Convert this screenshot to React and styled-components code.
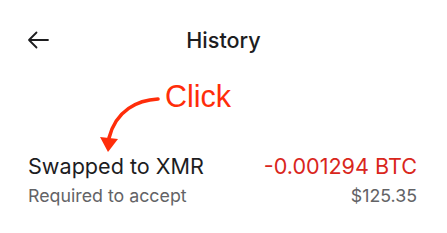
import React from "react";
import styled, { createGlobalStyle } from "styled-components";

const Global = createGlobalStyle`
  html, body { margin: 0; padding: 0; background: #ffffff; }
  body { font-family: Inter, "Noto Sans", sans-serif; color: #1d1d1f; }
`;

const Page = styled.div`
  width: 447px;
  height: 233px;
  overflow: hidden;
  display: flex;
  flex-direction: column;
`;

const Header = styled.header`
  height: 80px;
  display: grid;
  grid-template-columns: 1fr auto 1fr;
  align-items: center;
  padding: 0 27px;
`;

const BackButton = styled.button`
  justify-self: start;
  border: 0;
  background: none;
  padding: 0;
  width: 22px;
  height: 18px;
  display: flex;
  color: #1d1d1f;
  cursor: pointer;
`;

const Title = styled.h1`
  margin: 0;
  font-size: 21.6px;
  font-weight: 500;
  line-height: 24px;
  color: #1d1d1f;
`;

const Annotation = styled.div`
  height: 73px;
  display: flex;
  align-items: flex-start;
  padding-left: 98px;
`;

const ArrowMark = styled.svg`
  margin-top: 12px;
  flex: none;
  overflow: visible;
`;

const ClickLabel = styled.span`
  margin-top: 1px;
  margin-left: 3px;
  font-family: "Liberation Sans", Arial, sans-serif;
  font-size: 30.5px;
  line-height: 30px;
  color: #ff2d0a;
`;

const Row = styled.div`
  display: flex;
  flex-direction: column;
  gap: 6px;
  padding: 0 30px 0 28px;
`;

const Line = styled.div`
  display: flex;
  justify-content: space-between;
  align-items: baseline;
`;

const Primary = styled.span`
  font-size: ${(p) => (p.$small ? "17.8px" : "21.6px")};
  line-height: ${(p) => (p.$small ? "22px" : "26px")};
  color: ${(p) => p.$color || "#1d1d1f"};
`;

export default function App() {
  return (
    <>
      <Global />
      <Page>
        <Header>
          <BackButton aria-label="Back">
            <svg width="22" height="18" viewBox="0 0 22 18" fill="none">
              <path d="M21 9H2M9.5 1.5L2 9l7.5 7.5" stroke="currentColor" strokeWidth="1.8" strokeLinecap="round" strokeLinejoin="round" />
            </svg>
          </BackButton>
          <Title>History</Title>
          <span />
        </Header>
        <Annotation>
          <ArrowMark width="64" height="60" viewBox="0 0 64 60">
            <path d="M60 7 C 40 8, 18 18, 11 46" stroke="#ff2d0a" strokeWidth="3.6" fill="none" strokeLinecap="round" />
            <path d="M2 45 L20 47 L10 60 Z" fill="#ff2d0a" />
          </ArrowMark>
          <ClickLabel>Click</ClickLabel>
        </Annotation>
        <Row>
          <Line>
            <Primary>Swapped to XMR</Primary>
            <Primary $color="#d9261c">-0.001294 BTC</Primary>
          </Line>
          <Line>
            <Primary $small $color="#636366">Required to accept</Primary>
            <Primary $small $color="#636366">$125.35</Primary>
          </Line>
        </Row>
      </Page>
    </>
  );
}
